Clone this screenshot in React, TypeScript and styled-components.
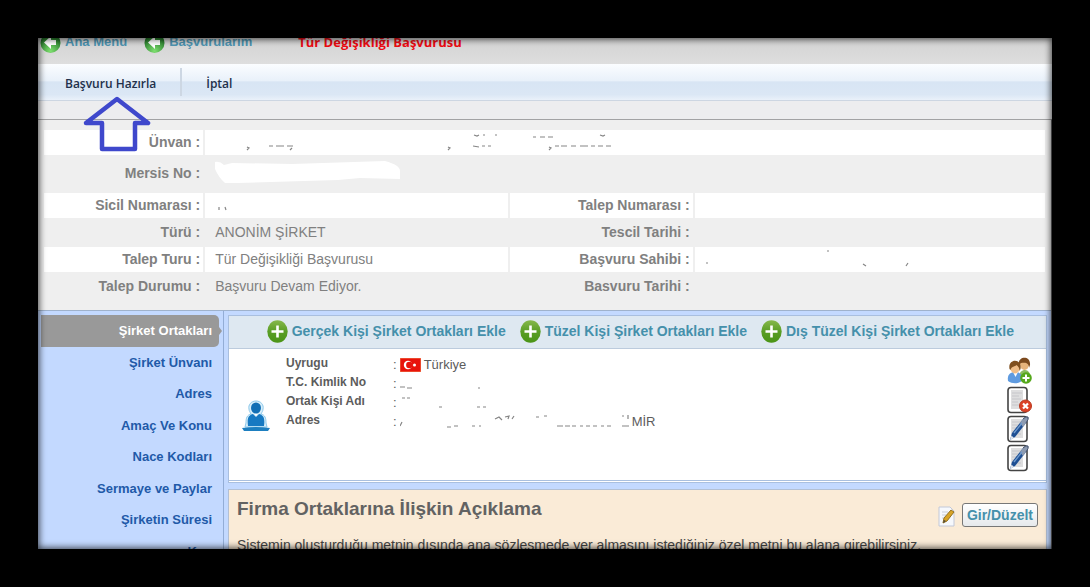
import React from "react";
import styled, { createGlobalStyle } from "styled-components";

const GlobalStyle = createGlobalStyle`
  * { box-sizing: border-box; }
  body {
    margin: 0;
    background: #000;
    font-family: "Liberation Sans", Arial, sans-serif;
    font-size: 14px;
  }
  button { font-family: inherit; border: 0; background: none; padding: 0; cursor: pointer; }
  a { text-decoration: none; }
  svg { display: block; }
`;

const Frame = styled.div`
  position: relative;
  height: calc(100vh - 76px);
  margin: 38px;
  overflow: hidden;
  background: #ededed;
  &::after {
    content: "";
    position: absolute;
    inset: 0;
    box-shadow: inset 0 0 7px 1px rgba(0, 0, 0, 0.75);
    pointer-events: none;
  }
`;

const TopBar = styled.header`
  display: flex;
  align-items: flex-start;
  height: 34px;
  margin-top: -8px;
  background: linear-gradient(#cfcfcf, #dedede);
  line-height: 24px;
`;

const BackLink = styled.a<{ $gap: number }>`
  display: flex;
  align-items: flex-start;
  gap: 4px;
  margin-left: 2px;
  margin-right: ${(p) => p.$gap}px;
  font-weight: bold;
  font-size: 13px;
  color: #4d93b0;
`;

const PageTitle = styled.h1`
  margin: 0;
  font-family: "Open Sans", "Noto Sans", sans-serif;
  font-size: 13px;
  font-weight: 700;
  line-height: 24px;
  color: #ec0a12;
`;

const Toolbar = styled.nav`
  display: flex;
  align-items: stretch;
  height: 37px;
  padding: 4px 3px;
  border-bottom: 1px solid #cdd6e2;
  background: linear-gradient(#fbfdff 0%, #e9f1fa 46%, #d8e5f4 50%, #dbe7f5 85%, #eaf1fa 100%);
`;

const ToolbarButton = styled.button`
  position: relative;
  padding: 2px 24px 0;
  border-right: 2px solid #cdd7e3;
  font-family: "Open Sans", "Noto Sans", sans-serif;
  font-size: 12px;
  font-weight: 600;
  color: #22304a;
  &:last-child { border-right: 0; }
`;

const Pointer = styled.svg`
  position: absolute;
  top: 27px;
  left: 42px;
  z-index: 1;
`;

const Strip = styled.div`
  height: 18px;
  background: #ededef;
`;

const Body = styled.div`
  border-top: 1px solid #a2a2a4;
  border-right: 1px solid #6c6c6e;
`;

const Summary = styled.section`
  padding: 8px 4px 9px;
  background: #efefef;
`;

const InfoTable = styled.table`
  width: 100%;
  table-layout: fixed;
  border-collapse: separate;
  border-spacing: 2px;
  color: #808080;
`;

const InfoRow = styled.tr<{ $white?: boolean; $tall?: boolean }>`
  height: ${(p) => (p.$tall ? 34 : 25)}px;
  background: ${(p) => (p.$white ? "#fff" : "transparent")};
`;

const Label = styled.th`
  padding: 0 3px 2px 0;
  text-align: right;
  font-size: 14px;
  line-height: 18px;
`;

const Value = styled.td`
  padding: 0 0 2px 10px;
  font-size: 14px;
  line-height: 18px;
`;

const Column = styled.col<{ $width?: string }>`
  width: ${(p) => p.$width ?? "auto"};
`;

const Columns = styled.div`
  display: flex;
  border-top: 1px solid #9fb2cc;
  background: #c3d9ff;
`;

const Sidebar = styled.ul`
  display: grid;
  grid-template-rows: repeat(8, 1fr);
  flex: 0 0 186px;
  height: 256px;
  margin: 0;
  padding: 4px 4px 0 3px;
  border-right: 1px solid #93add6;
  list-style: none;
`;

const SideLink = styled.a<{ $active?: boolean }>`
  position: relative;
  display: flex;
  align-items: center;
  justify-content: flex-end;
  height: 100%;
  padding-right: 7px;
  border-radius: 0 5px 5px 0;
  font-size: 13px;
  font-weight: bold;
  color: ${(p) => (p.$active ? "#fff" : "#2159a8")};
  background: ${(p) => (p.$active ? "#999" : "transparent")};
  &::after {
    content: "";
    display: ${(p) => (p.$active ? "block" : "none")};
    position: absolute;
    right: -3px;
    border: 4px solid transparent;
    border-right: 0;
    border-left: 3px solid #999;
  }
`;

const Content = styled.main`
  flex: 1;
  min-width: 0;
  padding: 4px 4px 0;
`;

const Card = styled.section`
  border: 1px solid #a9bfdf;
  border-bottom: 3px double #a9bfdf;
  background: #fff;
`;

const Actions = styled.div`
  display: flex;
  justify-content: flex-end;
  gap: 14px;
  height: 33px;
  padding-right: 32px;
  border-bottom: 1px solid #bccbdd;
  background: #dee8f1;
`;

const AddButton = styled.button`
  display: flex;
  align-items: center;
  gap: 4px;
  padding-bottom: 2px;
  font-size: 14px;
  font-weight: bold;
  color: #4590ab;
`;

const Partner = styled.div`
  display: flex;
  height: 131px;
  padding: 5px 14px 0 12px;
`;

const Avatar = styled.div`
  width: 45px;
  padding-top: 46px;
`;

const Details = styled.dl`
  flex: 1;
  display: grid;
  grid-template-columns: 107px 1fr;
  grid-auto-rows: 19px;
  align-content: start;
  margin: 0;
  line-height: 19px;
  color: #5c5c5c;
`;

const Term = styled.dt`
  font-size: 12px;
  font-weight: bold;
`;

const Datum = styled.dd`
  display: flex;
  align-items: center;
  gap: 3px;
  margin: 0;
  padding-top: 2px;
  font-size: 13px;
`;

const IconColumn = styled.div`
  display: flex;
  flex-direction: column;
  gap: 1px;
  padding-top: 3px;
`;

const IconButton = styled.button`
  width: 25px;
  height: 28px;
`;

const Note = styled.section`
  margin-top: 6px;
  padding: 7px 8px;
  height: 90px;
  border: 1px solid #b3c0d4;
  background: #faebd7;
`;

const NoteHead = styled.div`
  display: flex;
  align-items: flex-end;
  gap: 7px;
  height: 30px;
`;

const NoteTitle = styled.h2`
  flex: 1;
  align-self: flex-start;
  margin: 0;
  font-size: 19px;
  line-height: 24px;
  color: #626262;
`;

const EditButton = styled.button`
  height: 24px;
  padding: 0 4px;
  border: 1px solid #777;
  border-radius: 3px;
  background: linear-gradient(#fff, #e6e9ec);
  font-size: 14px;
  font-weight: bold;
  color: #4590ab;
`;

const NoteText = styled.p`
  margin: 10px 0 0;
  font-size: 14px;
  line-height: 16px;
  color: #444;
`;

const BackIcon = () => (
  <svg width="21" height="24" viewBox="0 0 21 24" aria-hidden="true">
    <defs>
      <radialGradient id="back" cx="0.5" cy="0.9" r="0.8">
        <stop offset="0" stopColor="#7fe070" />
        <stop offset="1" stopColor="#18691f" />
      </radialGradient>
    </defs>
    <circle cx="10.500" cy="13" r="10" fill="url(#back)" />
    <path d="M4 12.500 11 6v4h5v5h-5v4z" fill="#fff" />
  </svg>
);

const PlusIcon = () => (
  <svg width="21" height="23" viewBox="0 0 21 23" aria-hidden="true">
    <defs>
      <linearGradient id="plus" x1="0" y1="0" x2="0" y2="1">
        <stop offset="0" stopColor="#86b84c" />
        <stop offset="0.5" stopColor="#5a9e26" />
        <stop offset="1" stopColor="#4a9416" />
      </linearGradient>
    </defs>
    <ellipse cx="10.500" cy="11.500" rx="10.200" ry="11.200" fill="url(#plus)" />
    <path d="M10.500 5.500v12M4.500 11.500h12" stroke="#fff" strokeWidth="2.600" />
  </svg>
);

const PersonIcon = () => (
  <svg width="30" height="32" viewBox="0 0 30 32" aria-hidden="true">
    <path d="M15 1c-5 0-8 4-7 8 0 2 1 3 2 5-4 1-5 4-5 9l-1 4h22l-1-4c0-5-1-8-5-9 1-2 2-3 2-5 1-4-2-8-7-8z" fill="#d7eefa" stroke="#8cc8ea" />
    <ellipse cx="15" cy="8" rx="5" ry="5.500" fill="#126fb5" />
    <path d="M7 26c-1-7 0-11 5-12l3 3 3-3c5 1 6 5 5 12z" fill="#1679c2" />
    <path d="m13.500 14 1.500 2 1.500-2z" fill="#fff" />
    <path d="M1 28q14-2 28 0l-2 3H3z" fill="#1d7fc0" />
  </svg>
);

const Flag = () => (
  <svg width="21" height="14" viewBox="0 0 21 14" role="img" aria-label="Türkiye">
    <path d="M0 0h21v14H0z" fill="#e8130c" />
    <path d="M0 0h21v14H0z" fill="none" stroke="#f08050" />
    <circle cx="8" cy="7" r="4.200" fill="#fff" />
    <circle cx="9.300" cy="7" r="3.200" fill="#e8130c" />
    <circle cx="14.500" cy="7" r="1.500" fill="#fff" />
  </svg>
);

const PeopleIcon = () => (
  <svg width="25" height="28" viewBox="0 0 25 28" aria-hidden="true">
    <path d="M12 21c0-6 3-8 6-8s6 3 5 8z" fill="#8cbb62" />
    <ellipse cx="17.500" cy="7" rx="4.500" ry="6" fill="#e7b37b" />
    <path d="M12 8c-2-9 12-10 11 0l-1 3c0-5-3-6-8-5z" fill="#7c4a1e" />
    <path d="M1 24c-1-6 2-9 7-9s8 3 7 9c-4 3-10 3-14 0z" fill="#5f9be0" />
    <path d="m6 15 2.500 5 2.500-5z" fill="#fff" />
    <ellipse cx="8" cy="10.500" rx="4.800" ry="6" fill="#efbd88" />
    <path d="M2.500 12c-2-11 13-11 11 0l-1 2c0-4-2-5-3-6-2 2-5 1-6 5z" fill="#80501f" />
    <circle cx="19" cy="21" r="5.800" fill="#55a81c" />
    <path d="M19 17.500v7M15.500 21h7" stroke="#fff" strokeWidth="2" />
  </svg>
);

const PageShape = () => (
  <>
    <rect x="1" y="1.500" width="19" height="25" rx="3" fill="#fff" stroke="#444" strokeWidth="1.600" />
    <path d="M4 4h12v19H4z" fill="#dededf" />
    <path d="M5 7h10M5 10h7M5 13h9M5 16h6M5 19h9" stroke="#c6c6ca" />
  </>
);

const DeletePageIcon = () => (
  <svg width="25" height="28" viewBox="0 0 25 28" aria-hidden="true">
    <PageShape />
    <circle cx="18.500" cy="20" r="6" fill="#dc4126" stroke="#b83a20" />
    <path d="m16 17.500 5 5m0-5-5 5" stroke="#fff" strokeWidth="2.200" />
  </svg>
);

const PenPageIcon = () => (
  <svg width="25" height="28" viewBox="0 0 25 28" aria-hidden="true">
    <PageShape />
    <path d="m3 25 2-7L16 4q3-3 5-2 1 2-2 6L8 22z" fill="#1e4f93" />
    <path d="M13 8l3-4q3-3 5-2 1 2-2 6l-3 4z" fill="#8e9cb2" />
    <path d="M16 4q3-3 5-2 1 2-2 6" fill="none" stroke="#44506a" />
    <path d="m7 18 8-10" stroke="#6f9bd0" strokeWidth="1.400" />
    <path d="m3 25 1.500-4.500L7 23z" fill="#dfe5ee" />
  </svg>
);

const EditIcon = () => (
  <svg width="17" height="21" viewBox="0 0 17 21" aria-hidden="true">
    <path d="M1 1h11l4 4v15H1z" fill="#f6f8fc" stroke="#c2c8d8" />
    <path d="M4 6h6M4 9h4M4 12h3" stroke="#c9ced9" />
    <path d="m5 17 1-5 7-8 3 2-7 9z" fill="#d9a425" stroke="#93701f" />
    <path d="m5 17 1-3 2 1z" fill="#444" />
  </svg>
);

const ArrowPointer = () => (
  <Pointer width="68" height="58" viewBox="0 0 68 58" aria-hidden="true">
    <path d="M34 4 65 28H52v26H19V28H3z" fill="none" stroke="#3f48cc" strokeWidth="4.500" strokeLinejoin="round" />
  </Pointer>
);

/* Leftover specks of the values that have been erased by hand. */
const Specks = ({ d, w, h = 18 }: { d: string; w: number; h?: number }) => (
  <svg width={w} height={h} viewBox={`0 0 ${w} ${h}`} aria-hidden="true">
    <path d={d} fill="none" stroke="#858585" strokeWidth="1.200" />
  </svg>
);

const sections = [
  "Şirket Ortakları",
  "Şirket Ünvanı",
  "Adres",
  "Amaç Ve Konu",
  "Nace Kodları",
  "Sermaye ve Paylar",
  "Şirketin Süresi",
  "Kan",
];

const addActions = [
  "Gerçek Kişi Şirket Ortakları Ekle",
  "Tüzel Kişi Şirket Ortakları Ekle",
  "Dış Tüzel Kişi Şirket Ortakları Ekle",
];

export default function App() {
  return (
    <>
      <GlobalStyle />
      <Frame>
        <TopBar>
          <BackLink href="#menu" $gap={15}>
            <BackIcon />
            Ana Menü
          </BackLink>
          <BackLink href="#basvurularim" $gap={46}>
            <BackIcon />
            Başvurularım
          </BackLink>
          <PageTitle>Tür Değişikliği Başvurusu</PageTitle>
        </TopBar>
        <Toolbar>
          <ToolbarButton>
            Başvuru Hazırla
            <ArrowPointer />
          </ToolbarButton>
          <ToolbarButton>İptal</ToolbarButton>
        </Toolbar>
        <Strip />
        <Body>
          <Summary>
            <InfoTable>
              <colgroup>
                <Column $width="16%" />
                <Column $width="30.4%" />
                <Column $width="18.4%" />
                <Column />
              </colgroup>
              <tbody>
                <InfoRow $white>
                  <Label scope="row">Ünvan :</Label>
                  <Value colSpan={3}>
                    <Specks
                      w={400}
                      d="M32 14l2 1-2 2M54 13h4m3 0h8m3 0h3m2 2-2 2M75 13h3M233 14l2 1-2 2M259 2l3 1 2-1M268 2h2m10 0h2M258 13l6 1m3-1h3m3 0h3M318 4h3m4 0h5m3 0h5M385 2l3 1 2-1M334 14l2 1-2 2M340 13h4m2 0h6m4 0h5m4 0h8m3 0h4m3 0h5m3 0h5"
                    />
                  </Value>
                </InfoRow>
                <InfoRow $tall>
                  <Label scope="row">Mersis No :</Label>
                  <Value>
                    <svg width="186" height="24" viewBox="0 0 186 24" aria-hidden="true">
                      <path d="M0 1q5-1 9 3l8-2 60 1L170 0q15 4 15 10v8l-40-1-22 2-100 3H10Q4 17 0 8z" fill="#fff" />
                    </svg>
                  </Value>
                  <Value colSpan={2} />
                </InfoRow>
                <InfoRow $white>
                  <Label scope="row">Sicil Numarası :</Label>
                  <Value>
                    <Specks w={30} d="M4 11v3M10 11l1 3" />
                  </Value>
                  <Label scope="row">Talep Numarası :</Label>
                  <Value />
                </InfoRow>
                <InfoRow>
                  <Label scope="row">Türü :</Label>
                  <Value>ANONİM ŞİRKET</Value>
                  <Label scope="row">Tescil Tarihi :</Label>
                  <Value />
                </InfoRow>
                <InfoRow $white>
                  <Label scope="row">Talep Turu :</Label>
                  <Value>Tür Değişikliği Başvurusu</Value>
                  <Label scope="row">Başvuru Sahibi :</Label>
                  <Value>
                    <Specks w={220} d="M1 13h2M122 1h2M158 14l3 2M201 16l2-3" />
                  </Value>
                </InfoRow>
                <InfoRow>
                  <Label scope="row">Talep Durumu :</Label>
                  <Value>Başvuru Devam Ediyor.</Value>
                  <Label scope="row">Basvuru Tarihi :</Label>
                  <Value />
                </InfoRow>
              </tbody>
            </InfoTable>
          </Summary>
          <Columns>
            <Sidebar>
              {sections.map((name, i) => (
                <li key={name}>
                  <SideLink href={`#bolum-${i + 1}`} $active={i === 0}>
                    {name}
                  </SideLink>
                </li>
              ))}
            </Sidebar>
            <Content>
              <Card>
                <Actions>
                  {addActions.map((name) => (
                    <AddButton key={name}>
                      <PlusIcon />
                      {name}
                    </AddButton>
                  ))}
                </Actions>
                <Partner>
                  <Avatar>
                    <PersonIcon />
                  </Avatar>
                  <Details>
                    <Term>Uyrugu</Term>
                    <Datum>
                      : <Flag /> Türkiye
                    </Datum>
                    <Term>T.C. Kimlik No</Term>
                    <Datum>
                      : <Specks w={90} d="M0 12h5m2 1h5M78 13h2" />
                    </Datum>
                    <Term>Ortak Kişi Adı</Term>
                    <Datum>
                      : <Specks w={90} d="M2 4h3m2 0h3M39 13h3M77 13h3m3 0h3" />
                    </Datum>
                    <Term>Adres</Term>
                    <Datum>
                      :{" "}
                      <Specks
                        w={229}
                        d="M2 9l-2 4M47 14h4m3-1h4M72 13h3m4 0h2M95 6l4-2 3 3m3-3 4-1-1 3m4 0 2-3M136 4h3m5-1h3M157 13h6m2 0h5m2 0h4m4 0h3m3 0h4m3 0h4m4 0h3m3 0h4M222 3h2m4-1v4M222 13h7"
                      />
                      MİR
                    </Datum>
                  </Details>
                  <IconColumn>
                    <IconButton aria-label="Temsilci ekle"><PeopleIcon /></IconButton>
                    <IconButton aria-label="Sil"><DeletePageIcon /></IconButton>
                    <IconButton aria-label="Düzenle"><PenPageIcon /></IconButton>
                    <IconButton aria-label="Adres düzenle"><PenPageIcon /></IconButton>
                  </IconColumn>
                </Partner>
              </Card>
              <Note>
                <NoteHead>
                  <NoteTitle>Firma Ortaklarına İlişkin Açıklama</NoteTitle>
                  <EditIcon />
                  <EditButton>Gir/Düzelt</EditButton>
                </NoteHead>
                <NoteText>
                  Sistemin oluşturduğu metnin dışında ana sözleşmede yer almasını istediğiniz özel metni bu alana
                  girebilirsiniz.
                </NoteText>
              </Note>
            </Content>
          </Columns>
        </Body>
      </Frame>
    </>
  );
}
